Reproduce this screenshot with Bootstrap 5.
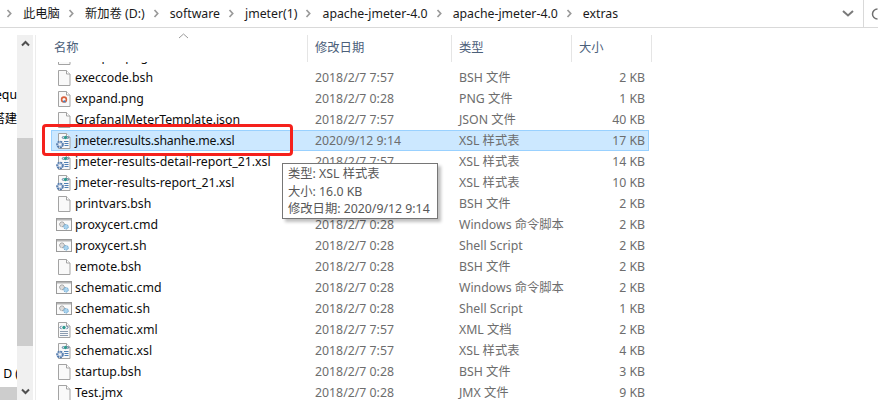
<!DOCTYPE html>
<html lang="zh-CN">
<head>
<meta charset="utf-8">
<title>extras</title>
<link href="https://cdn.jsdelivr.net/npm/bootstrap@5.3.0/dist/css/bootstrap.min.css" rel="stylesheet">
<style>
html,body{margin:0;background:#fff;}
body{font-family:"Noto Sans","Noto Sans CJK SC",sans-serif;font-size:12.3px;line-height:21px;color:#000;}
.fx-win{width:878px;height:400px;overflow:hidden;position:relative;}
.fx-addr{height:28px;border-bottom:1px solid #d9d9d9;color:#1a1a1a;}
.fx-crumb{white-space:nowrap;}
.fx-chev{width:7px;height:9px;margin:0 10px 0 8px;flex:none;}
.fx-chev:first-child{margin-left:6px;}
.fx-drop{margin-left:auto;width:15px;height:9px;margin-right:7px;flex:none;}
.fx-addsep{width:1px;height:27px;background:#d9d9d9;flex:none;}
.fx-refresh{width:7px;overflow:hidden;flex:none;padding-left:7px;box-sizing:content-box;}
.fx-body{height:372px;padding-top:7px;}
.fx-nav{width:17px;flex:none;overflow:hidden;height:365px;padding-top:49px;white-space:nowrap;}
.fx-nav div{height:21px;}
.fx-n2{margin-top:3px;}
.fx-n3{margin-top:234px;}
.fx-n4{margin-top:3px;background:#cdcdcd;}
.fx-bar{width:16px;flex:none;background:#f0f0f0;height:365px;}
.fx-arrow{height:17px;}
.fx-thumb{background:#cdcdcd;height:208px;margin-top:86px;}
.fx-arrow-b{margin-top:37px;}
.fx-pane{width:1px;margin-left:2px;background:#ececec;height:365px;flex:none;}
.fx-main{padding-left:15px;flex:none;width:826px;position:relative;}
.fx-head{height:27px;color:#4c607a;position:relative;}
.fx-hc{height:27px;border-right:1px solid #e5e5e5;padding-left:7px;line-height:26px;flex:none;}
.fx-sort{position:absolute;left:127px;top:-2px;width:11px;height:6px;}
.fx-list{height:338px;overflow:hidden;}
.fx-rows{margin-top:-16px;}
.fx-row{height:21px;width:598px;color:#6d6d6d;white-space:nowrap;}
.fx-row.fx-sel{background:#cce8ff;box-shadow:inset 0 0 0 1px #99d1ff;}
.fx-c1{width:257px;color:#0d0d0d;padding-left:4px;flex:none;}
.fx-c1 svg{width:18px;height:18px;margin-right:2px;flex:none;}
.fx-c2{width:144px;padding-left:7px;flex:none;}
.fx-c3{width:120px;padding-left:7px;flex:none;}
.fx-c4{width:77px;padding-right:4px;text-align:right;flex:none;}
.fx-tight{letter-spacing:-.18px;}
.fx-w1{width:257px;padding-left:3px;}
.fx-w2{width:144px;}
.fx-w3{width:120px;}
.fx-w4{width:80px;}
.fx-red{position:absolute;left:42px;top:124px;width:251px;height:32px;border:3px solid #f5211c;border-radius:4px;}
.fx-tip{position:absolute;left:282px;top:163px;width:156px;height:56px;background:#fff;border:1px solid #767676;box-shadow:3px 3px 3px rgba(0,0,0,.25);color:#575757;padding:1px 5px;font-size:12.3px;line-height:17.5px;white-space:nowrap;}
</style>
</head>
<body>
<svg width="0" height="0" class="position-absolute">
<defs>
<symbol id="i-file" viewBox="0 0 18 18"><path d="M3.5 1.5h8l3.500 3.500v11.500H3.500z" fill="#f9f9f9" stroke="#a3a3a3"/><path d="M11.500 1.500V5H15" fill="#fff" stroke="#a3a3a3"/></symbol>
<symbol id="i-png" viewBox="0 0 18 18"><use href="#i-file"/><circle cx="9" cy="9.500" r="2.400" fill="none" stroke="#d8603c" stroke-width="1.600"/><path d="M7.500 12l1.800-2 2 2.500z" fill="#3f86c6"/></symbol>
<symbol id="i-cmd" viewBox="0 0 18 18"><rect x="1.500" y="2.500" width="15" height="12" fill="#fafafa" stroke="#9a9a9a"/><rect x="2" y="3" width="14" height="1.500" fill="#b5b5b5"/><circle cx="7" cy="8.300" r="2.400" fill="#dcdcdc" stroke="#8e8e8e" stroke-dasharray="1.500 .6"/><circle cx="11" cy="10.800" r="2.300" fill="#a9d3ee" stroke="#6ba6d0" stroke-dasharray="1.500 .6"/></symbol>
<symbol id="i-xml" viewBox="0 0 18 18"><use href="#i-file"/><circle cx="9" cy="6.500" r="1.700" fill="#2f9a8e"/><path d="M6.500 4.800L5 6.500l1.500 1.700M11.500 4.800L13 6.500l-1.500 1.700" fill="none" stroke="#456a96"/><path d="M5 10.500h8M5 12.500h8M5 14.500h8" stroke="#8b9cb0"/></symbol>
<symbol id="i-xsl" viewBox="0 0 18 18"><use href="#i-file"/><circle cx="10.500" cy="5.500" r="1.700" fill="#2f9a8e"/><path d="M8.500 4L7.300 5.500 8.500 7M12.500 4l1.200 1.500L12.500 7" fill="none" stroke="#456a96"/><path d="M9 9.500h4.500M9.500 11.500h4M9.500 13.500h4" stroke="#4f7fb4" stroke-width="1.200"/><circle cx="5" cy="12.500" r="3" fill="#b8c7dc" stroke="#4f78ac" stroke-width="1.600" stroke-dasharray="2 .8"/><circle cx="5" cy="12.500" r="1" fill="#fff"/></symbol>
<symbol id="i-chev" viewBox="0 0 7 9"><path d="M1.500 1l3.200 3.500L1.500 8" fill="none" stroke="#9a9a9a" stroke-width="1.700"/></symbol>
</defs>
</svg>
<div class="fx-win">
  <div class="fx-addr d-flex align-items-center fx-crumb">
    <svg class="fx-chev"><use href="#i-chev"/></svg><span>此电脑</span>
    <svg class="fx-chev"><use href="#i-chev"/></svg><span>新加卷 (D:)</span>
    <svg class="fx-chev"><use href="#i-chev"/></svg><span>software</span>
    <svg class="fx-chev"><use href="#i-chev"/></svg><span>jmeter(1)</span>
    <svg class="fx-chev"><use href="#i-chev"/></svg><span>apache-jmeter-4.0</span>
    <svg class="fx-chev"><use href="#i-chev"/></svg><span>apache-jmeter-4.0</span>
    <svg class="fx-chev"><use href="#i-chev"/></svg><span>extras</span>
    <svg class="fx-drop" viewBox="0 0 15 9"><path d="M2 2l5 4.500L12 2" fill="none" stroke="#7a7a7a" stroke-width="2"/></svg>
    <span class="fx-addsep"></span>
    <svg class="fx-refresh" viewBox="0 0 7 14" height="14"><path d="M6.500 2A5 5 0 0 0 6.500 12" fill="none" stroke="#707070" stroke-width="1.500"/></svg>
  </div>
  <div class="fx-body d-flex">
    <div class="fx-nav">
      <div class="d-flex justify-content-end"><span>requ</span></div>
      <div class="fx-n2 d-flex justify-content-end"><span>搭建</span></div>
      <div class="fx-n3"><span>&nbsp;D (</span></div>
      <div class="fx-n4"></div>
    </div>
    <div class="fx-bar">
      <div class="fx-arrow d-flex align-items-center justify-content-center"><svg width="9" height="7" viewBox="0 0 9 7"><path d="M1 5.500l3.500-3.500L8 5.500" fill="none" stroke="#505050" stroke-width="2"/></svg></div>
      <div class="fx-thumb"></div>
      <div class="fx-arrow fx-arrow-b d-flex align-items-center justify-content-center"><svg width="9" height="7" viewBox="0 0 9 7"><path d="M1 1.500l3.500 3.500L8 1.500" fill="none" stroke="#505050" stroke-width="2"/></svg></div>
    </div>
    <div class="fx-pane"></div>
    <div class="fx-main">
      <div class="fx-head d-flex">
        <svg class="fx-sort" viewBox="0 0 11 6"><path d="M1 5l4.500-4L10 5" fill="none" stroke="#9a9a9a"/></svg>
        <div class="fx-hc fx-w1">名称</div>
        <div class="fx-hc fx-w2">修改日期</div>
        <div class="fx-hc fx-w3">类型</div>
        <div class="fx-hc fx-w4">大小</div>
      </div>
      <div class="fx-list">
        <div class="fx-rows">
          <div class="fx-row d-flex"><div class="fx-c1 d-flex align-items-center"><svg><use href="#i-png"/></svg>collapse.png</div><div class="fx-c2">2018/2/7 0:28</div><div class="fx-c3">PNG 文件</div><div class="fx-c4">1 KB</div></div>
          <div class="fx-row d-flex"><div class="fx-c1 d-flex align-items-center"><svg><use href="#i-file"/></svg>execcode.bsh</div><div class="fx-c2">2018/2/7 7:57</div><div class="fx-c3">BSH 文件</div><div class="fx-c4">2 KB</div></div>
          <div class="fx-row d-flex"><div class="fx-c1 d-flex align-items-center"><svg><use href="#i-png"/></svg>expand.png</div><div class="fx-c2">2018/2/7 0:28</div><div class="fx-c3">PNG 文件</div><div class="fx-c4">1 KB</div></div>
          <div class="fx-row d-flex"><div class="fx-c1 d-flex align-items-center"><svg><use href="#i-file"/></svg>GrafanaJMeterTemplate.json</div><div class="fx-c2">2018/2/7 7:57</div><div class="fx-c3">JSON 文件</div><div class="fx-c4">40 KB</div></div>
          <div class="fx-row fx-sel d-flex"><div class="fx-c1 fx-tight d-flex align-items-center"><svg><use href="#i-xsl"/></svg>jmeter.results.shanhe.me.xsl</div><div class="fx-c2">2020/9/12 9:14</div><div class="fx-c3">XSL 样式表</div><div class="fx-c4">17 KB</div></div>
          <div class="fx-row d-flex"><div class="fx-c1 d-flex align-items-center"><svg><use href="#i-xsl"/></svg>jmeter-results-detail-report_21.xsl</div><div class="fx-c2">2018/2/7 7:57</div><div class="fx-c3">XSL 样式表</div><div class="fx-c4">14 KB</div></div>
          <div class="fx-row d-flex"><div class="fx-c1 d-flex align-items-center"><svg><use href="#i-xsl"/></svg>jmeter-results-report_21.xsl</div><div class="fx-c2">2018/2/7 7:57</div><div class="fx-c3">XSL 样式表</div><div class="fx-c4">10 KB</div></div>
          <div class="fx-row d-flex"><div class="fx-c1 d-flex align-items-center"><svg><use href="#i-file"/></svg>printvars.bsh</div><div class="fx-c2">2018/2/7 7:57</div><div class="fx-c3">BSH 文件</div><div class="fx-c4">2 KB</div></div>
          <div class="fx-row d-flex"><div class="fx-c1 d-flex align-items-center"><svg><use href="#i-cmd"/></svg>proxycert.cmd</div><div class="fx-c2">2018/2/7 0:28</div><div class="fx-c3">Windows 命令脚本</div><div class="fx-c4">2 KB</div></div>
          <div class="fx-row d-flex"><div class="fx-c1 d-flex align-items-center"><svg><use href="#i-cmd"/></svg>proxycert.sh</div><div class="fx-c2">2018/2/7 0:28</div><div class="fx-c3">Shell Script</div><div class="fx-c4">2 KB</div></div>
          <div class="fx-row d-flex"><div class="fx-c1 d-flex align-items-center"><svg><use href="#i-file"/></svg>remote.bsh</div><div class="fx-c2">2018/2/7 0:28</div><div class="fx-c3">BSH 文件</div><div class="fx-c4">2 KB</div></div>
          <div class="fx-row d-flex"><div class="fx-c1 d-flex align-items-center"><svg><use href="#i-cmd"/></svg>schematic.cmd</div><div class="fx-c2">2018/2/7 0:28</div><div class="fx-c3">Windows 命令脚本</div><div class="fx-c4">2 KB</div></div>
          <div class="fx-row d-flex"><div class="fx-c1 d-flex align-items-center"><svg><use href="#i-cmd"/></svg>schematic.sh</div><div class="fx-c2">2018/2/7 0:28</div><div class="fx-c3">Shell Script</div><div class="fx-c4">1 KB</div></div>
          <div class="fx-row d-flex"><div class="fx-c1 d-flex align-items-center"><svg><use href="#i-xml"/></svg>schematic.xml</div><div class="fx-c2">2018/2/7 7:57</div><div class="fx-c3">XML 文档</div><div class="fx-c4">2 KB</div></div>
          <div class="fx-row d-flex"><div class="fx-c1 d-flex align-items-center"><svg><use href="#i-xsl"/></svg>schematic.xsl</div><div class="fx-c2">2018/2/7 7:57</div><div class="fx-c3">XSL 样式表</div><div class="fx-c4">4 KB</div></div>
          <div class="fx-row d-flex"><div class="fx-c1 d-flex align-items-center"><svg><use href="#i-file"/></svg>startup.bsh</div><div class="fx-c2">2018/2/7 0:28</div><div class="fx-c3">BSH 文件</div><div class="fx-c4">3 KB</div></div>
          <div class="fx-row d-flex"><div class="fx-c1 d-flex align-items-center"><svg><use href="#i-file"/></svg>Test.jmx</div><div class="fx-c2">2018/2/7 0:28</div><div class="fx-c3">JMX 文件</div><div class="fx-c4">9 KB</div></div>
        </div>
      </div>
    </div>
  </div>
  <div class="fx-red"></div>
  <div class="fx-tip">类型: XSL 样式表<br>大小: 16.0 KB<br>修改日期: 2020/9/12 9:14</div>
</div>
<script src="https://cdn.jsdelivr.net/npm/bootstrap@5.3.0/dist/js/bootstrap.bundle.min.js"></script>
</body>
</html>
